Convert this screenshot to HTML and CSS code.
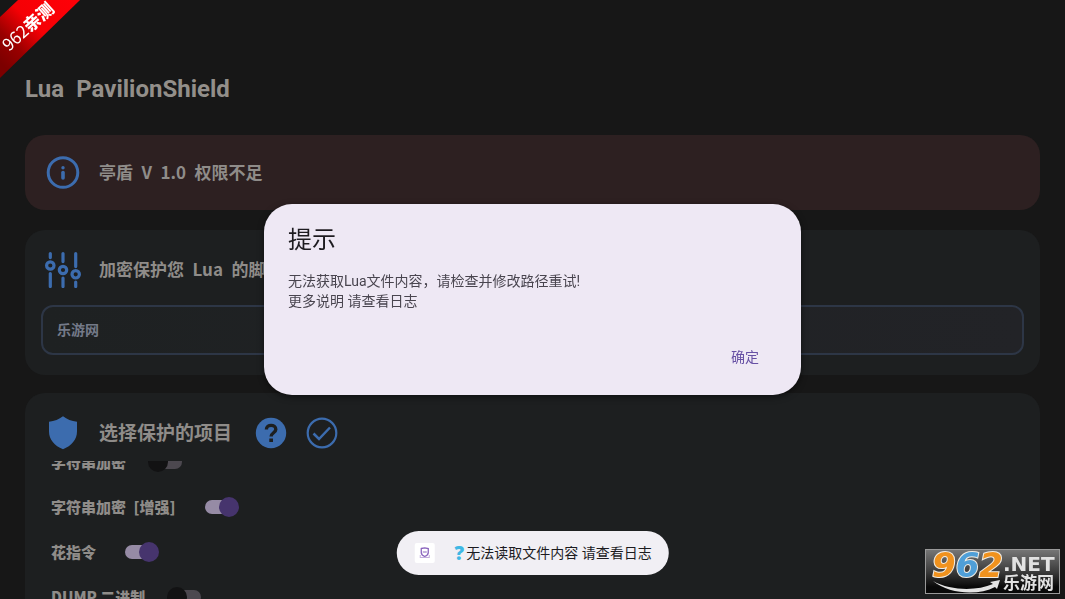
FILE: index.html
```html
<!DOCTYPE html>
<html lang="zh-CN">
  <head>
    <meta charset="UTF-8" />
    <meta name="viewport" content="width=device-width, initial-scale=1.0" />
    <title>Lua PavilionShield</title>
    <link rel="stylesheet" href="styles.css">
  </head>
  <body>
    <main class="page">
      <h1 class="page-title">Lua&ensp;PavilionShield</h1>

      <section class="card status-card">
        <div class="card-head">
          <svg class="icon" viewBox="0 0 36 36">
            <circle cx="18" cy="17.500" r="14.800" fill="none" stroke="currentColor" stroke-width="3" />
            <circle cx="18" cy="12.800" r="1.700" fill="currentColor" />
            <path d="M18 17.500v5.500" stroke="currentColor" stroke-width="3.600" stroke-linecap="round" />
          </svg>
          <h2>亭盾&ensp;V&ensp;1.0&ensp;权限不足</h2>
        </div>
      </section>

      <section class="card path-card">
        <div class="card-head">
          <svg class="icon" viewBox="0 0 36 36" fill="none" stroke="currentColor" stroke-width="3.200" stroke-linecap="round">
            <path d="M5.300 1.600v4M5.300 21.500v13M18 1.600v8M18 26v8.500M30.700 1.600v13M30.700 30v4.500" />
            <circle cx="5.300" cy="13.500" r="3.700" />
            <circle cx="18" cy="18" r="3.700" />
            <circle cx="30.700" cy="22.300" r="3.700" />
          </svg>
          <h2><label for="path">加密保护您&ensp;Lua&ensp;的脚本</label></h2>
        </div>
        <input type="text" id="path" class="path-input" value="乐游网" />
      </section>

      <section class="card options-card">
        <div class="card-head">
          <svg class="icon" viewBox="0 0 36 36">
            <path d="M18 1.300C14 4.300 9.500 6.200 4 6.800v9.700c0 8 5.500 14.300 14 17.800 8.500-3.500 14-9.800 14-17.800V6.800C26.500 6.200 22 4.300 18 1.300z" fill="currentColor" />
          </svg>
          <h2 class="large">选择保护的项目</h2>
          <div class="actions">
            <button class="icon-btn" type="button" aria-label="帮助">
              <svg class="icon" viewBox="0 0 36 36">
                <circle cx="18" cy="18" r="15.200" fill="currentColor" />
                <path d="M13.400 14.500c0-5.500 9.400-5.500 9.400 0 0 3.200-4.700 3.400-4.700 7" fill="none" stroke="#1d1f20" stroke-width="3.400" />
                <path d="M16.300 23.500h3.700v3.500h-3.700z" fill="#1d1f20" />
              </svg>
            </button>
            <button class="icon-btn" type="button" aria-label="全选">
              <svg class="icon" viewBox="0 0 36 36" fill="none" stroke="currentColor">
                <circle cx="18" cy="18" r="14.300" stroke-width="2.200" />
                <path d="M9.500 18.500l5.500 5.500 11-11.500" stroke-width="2.500" />
              </svg>
            </button>
          </div>
        </div>

        <div class="option-list">
          <ul>
            <li><label>字符串加密 <input type="checkbox" class="switch" /></label></li>
            <li><label>字符串加密&ensp;[增强] <input type="checkbox" class="switch" checked /></label></li>
            <li><label>花指令 <input type="checkbox" class="switch" checked /></label></li>
            <li><label>DUMP 二进制 <input type="checkbox" class="switch" /></label></li>
          </ul>
        </div>
      </section>
    </main>

    <div class="overlay">
      <div class="dialog" role="dialog" aria-labelledby="dialog-title">
        <h2 id="dialog-title">提示</h2>
        <p>无法获取Lua文件内容，请检查并修改路径重试!<br />更多说明 请查看日志</p>
        <div class="dialog-buttons">
          <button type="button" class="ok-btn">确定</button>
        </div>
      </div>
    </div>

    <div class="toast" role="status">
      <span class="toast-icon">
        <svg viewBox="0 0 20 20" fill="none" stroke="#8a63bd">
          <path d="M6.500 5.500l3.500-.7 3.500.7v4c0 2-1.300 3.200-3.500 4-2.200-.8-3.500-2-3.500-4z" stroke-width="1.300" />
          <path d="M8 9h4" />
          <path d="M5 14.500h10M5.500 12v2M14.500 12v2" stroke="#c3addd" />
        </svg>
      </span>
      <span class="toast-text"><b>?</b>无法读取文件内容 请查看日志</span>
    </div>

    <!-- corner ribbon -->
    <svg class="ribbon" viewBox="0 0 80 80">
      <defs>
        <linearGradient id="red" x1="0" y1="1" x2="1" y2="0">
          <stop offset="0.100" stop-color="#7c0000" />
          <stop offset="0.300" stop-color="#990000" />
          <stop offset="0.550" stop-color="#f50005" />
          <stop offset="1" stop-color="#ff0008" />
        </linearGradient>
      </defs>
      <path d="M18 0H80L0 78V17z" fill="url(#red)" />
      <text transform="translate(9 52) rotate(-42)">962<tspan class="bold">亲测</tspan></text>
    </svg>

    <!-- site watermark -->
    <svg class="watermark" viewBox="0 0 135 45">
      <defs>
        <linearGradient id="shade" x1="0" y1="0" x2="0" y2="1">
          <stop offset="0" stop-color="#777" />
          <stop offset="0.500" stop-color="#3c3c3c" />
          <stop offset="0.850" stop-color="#090909" />
        </linearGradient>
      </defs>
      <rect x="0.500" y="0.500" width="134" height="44" fill="url(#shade)" stroke="#999" />
      <path d="M8 32c18 10 44 10 60 3l-3-2 10-2-3 9-2-2c-17 9-46 7-62-6z" fill="#e4e4e4" />
      <text class="digits" x="7" y="28"><tspan fill="#f0921e">9</tspan><tspan fill="#4f9fd8">6</tspan><tspan fill="#f0921e">2</tspan></text>
      <text class="net" x="78" y="22">.NET</text>
      <text class="site" x="78" y="40">乐游网</text>
    </svg>
  </body>
</html>
```
FILE: styles.css
```css
* {
  box-sizing: border-box;
}

body {
  margin: 0;
  background-color: #171717;
  color: #8f8c89;
  font-family: Roboto, "Noto Sans CJK SC", sans-serif;
  overflow: hidden;
}

h1,
h2,
p,
ul {
  margin: 0;
  padding: 0;
}

button {
  border: none;
  padding: 0;
  background: none;
  font-family: inherit;
  cursor: pointer;
}

.page {
  display: flex;
  flex-direction: column;
  height: 100vh;
  padding: 0 25px;
}

.page-title {
  padding: 74px 0 31px;
  font-family: Roboto, sans-serif;
  font-size: 24px;
  line-height: 30px;
  font-weight: 700;
  color: #938f8a;
}

.card {
  flex: none;
  padding: 22px 16px 20px;
  border-radius: 20px;
  background-color: #1d1f20;
}

.status-card {
  padding: 20px 16px 19px;
  background-color: #2d2021;
}

.path-card {
  margin: 20px 0 18px;
}

.card-head {
  display: flex;
  align-items: center;
  gap: 18px;
  padding-left: 4px;
}

.card-head h2 {
  padding-bottom: 2px;
  font-family: "Noto Sans CJK SC", sans-serif;
  font-size: 17px;
  line-height: 24px;
  font-weight: 700;
  white-space: nowrap;
}

.card-head h2.large {
  font-size: 19px;
}

.icon {
  display: block;
  flex: none;
  width: 36px;
  height: 36px;
  color: #3c6cae;
}

.actions {
  display: flex;
  gap: 15px;
  margin-left: 3px;
}

.path-input {
  display: block;
  width: 100%;
  height: 50px;
  margin-top: 17px;
  padding: 0 14px 2px;
  border: 2px solid #2d3646;
  border-radius: 12px;
  background: linear-gradient(90deg, #1e2122, #222327);
  color: #747a89;
  font-family: "Noto Sans CJK SC", sans-serif;
  font-size: 14px;
  font-weight: 700;
}

.options-card {
  display: flex;
  flex: 1;
  flex-direction: column;
  min-height: 0;
  padding-bottom: 0;
  border-radius: 20px 20px 0 0;
}

.option-list {
  flex: 1;
  min-height: 0;
  margin-top: 10px;
  overflow: hidden;
}

.option-list ul {
  margin-top: -22px;
  padding-left: 10px;
  list-style: none;
}

.option-list label {
  display: flex;
  align-items: center;
  gap: 22px;
  width: max-content;
  height: 45px;
  font-family: "Noto Sans CJK SC", sans-serif;
  font-size: 15px;
  font-weight: 900;
}

.switch {
  appearance: none;
  position: relative;
  width: 41px;
  height: 20px;
  margin: 0;
}

.switch::before,
.switch::after {
  content: "";
  position: absolute;
}

.switch::before {
  top: 3px;
  left: 7px;
  width: 27px;
  height: 14px;
  border-radius: 7px;
  background-color: #4c484f;
}

.switch::after {
  top: 0;
  left: 0;
  width: 20px;
  height: 20px;
  border-radius: 50%;
  background-color: #121213;
}

.switch:checked::before {
  background-color: #968ba5;
}

.switch:checked::after {
  left: 21px;
  background-color: #46346d;
}

.overlay {
  position: fixed;
  inset: 0;
  display: flex;
  align-items: center;
  justify-content: center;
}

.dialog {
  width: 90%;
  max-width: 537px;
  padding: 20px 24px 18px;
  border-radius: 28px;
  background-color: #eee8f4;
  color: #49454f;
  box-shadow: 0 2px 6px rgba(0, 0, 0, 0.5);
}

.dialog h2 {
  font-size: 24px;
  line-height: 32px;
  font-weight: 400;
  color: #1d1b20;
}

.dialog p {
  margin-top: 15px;
  font-size: 14px;
  line-height: 20px;
}

.dialog-buttons {
  display: flex;
  justify-content: flex-end;
  margin-top: 26px;
}

.ok-btn {
  padding: 0 18px;
  font-size: 14px;
  line-height: 40px;
  color: #6750a4;
}

.toast {
  position: fixed;
  left: 50%;
  bottom: 24px;
  transform: translateX(-50%);
  display: flex;
  align-items: center;
  gap: 18px;
  height: 44px;
  padding: 0 17px 0 18px;
  border-radius: 22px;
  background-color: #f1eff4;
  color: #1c1b1f;
  font-size: 14px;
  white-space: nowrap;
}

.toast-icon {
  width: 20px;
  height: 20px;
  border-radius: 2px;
  background-color: #fff;
}

.toast-icon svg {
  display: block;
}

.toast-text {
  display: flex;
  align-items: center;
  line-height: 20px;
}

.toast-text b {
  width: 14px;
  text-align: center;
  font-family: "Noto Sans", sans-serif;
  font-size: 19px;
  font-weight: 900;
  color: #3fb8e4;
}

.ribbon {
  position: fixed;
  top: 0;
  left: 0;
  width: 80px;
  height: 80px;
}

.ribbon text {
  fill: #fff;
  font-family: "Noto Sans CJK SC", sans-serif;
  font-size: 17px;
}

.ribbon .bold {
  font-weight: 900;
}

.watermark {
  position: fixed;
  right: 5px;
  bottom: 5px;
  width: 135px;
  height: 45px;
}

.digits {
  font: italic bold 34px "DejaVu Sans", sans-serif;
  stroke: #f2eee6;
  stroke-width: 2px;
  paint-order: stroke;
}

.net {
  fill: #e2e2e2;
  font: bold 20px "DejaVu Sans", sans-serif;
}

.site {
  fill: #e2e2e2;
  font: bold 17px "Noto Sans CJK SC", sans-serif;
}
```
